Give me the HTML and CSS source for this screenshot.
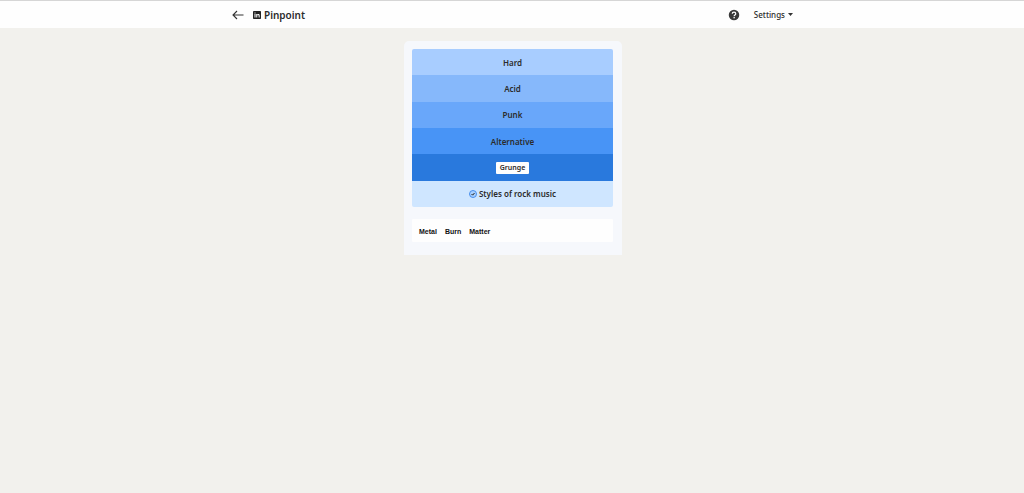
FILE: index.html
```
<!DOCTYPE html>
<html lang="en">
<head>
  <meta charset="UTF-8">
  <meta name="viewport" content="width=device-width, initial-scale=1.0">
  <title>Pinpoint</title>
  <link rel="stylesheet" href="styles.css">
</head>
<body>
  <header class="header">
    <div class="header-inner">
      <a href="#" class="back" aria-label="Back">
        <svg width="12" height="10" viewBox="0 0 12 10"><path d="M11.5 5H1M5 1L1 5l4 4" fill="none" stroke="#333" stroke-width="1.1"/></svg>
      </a>
      <div class="brand">
        <svg width="8" height="8" viewBox="0 0 16 16"><rect width="16" height="16" rx="1.5" fill="#222"/><path d="M3 6h2v7H3zM3 3h2v2H3zM6.5 6h2v1c1-1.600 4.800-1.800 4.800 2v4h-2V9.500c0-2.400-2.800-2.200-2.800 0V13h-2z" fill="#fff"/></svg>
        <h1>Pinpoint</h1>
      </div>
      <button class="help" aria-label="Help">
        <svg width="12" height="12" viewBox="0 0 24 24"><circle cx="12" cy="12" r="10.500" fill="#3a3a3a"/><path d="M8.500 9.500c0-4.500 7-4.500 7 0 0 2.500-3.300 2.500-3.300 5" fill="none" stroke="#fff" stroke-width="2.400"/><rect x="11" y="16" width="2.600" height="2.600" fill="#fff"/></svg>
      </button>
      <button class="settings">Settings
        <svg width="5" height="3" viewBox="0 0 5 3"><path d="M0 0h5L2.500 3z" fill="#333"/></svg>
      </button>
    </div>
  </header>

  <main class="game">
    <section class="card">
      <div class="board">
        <div class="row clue1">Hard</div>
        <div class="row clue2">Acid</div>
        <div class="row clue3">Punk</div>
        <div class="row clue4">Alternative</div>
        <div class="row clue5"><span class="tag">Grunge</span></div>
        <div class="row answer">
          <svg width="8" height="8" viewBox="0 0 16 16"><circle cx="8" cy="8" r="7" fill="#a8d0ff" stroke="#3b86ea" stroke-width="1.800"/><path d="M5 8l2.300 2.300 3.700-4.300" fill="none" stroke="#222" stroke-width="2"/></svg>
          Styles of rock music
        </div>
      </div>
      <div class="guesses">
        <span>Metal</span>
        <span>Burn</span>
        <span>Matter</span>
      </div>
    </section>
  </main>
</body>
</html>
```

FILE: styles.css
```
* { box-sizing: border-box; }
body { margin: 0; background-color: #f2f1ed; font-family: "Noto Sans", "Open Sans", sans-serif; font-size: 8px; color: #2b2b2b; }
button { padding: 0; border: none; background: none; font: inherit; color: inherit; cursor: pointer; }
svg { display: block; flex: none; }

.header { background: #fefefe; border-top: 1px solid #d6d6d6; }
.header-inner { display: flex; align-items: center; max-width: 562px; height: 27px; margin: auto; padding-left: 1px; }
.back { margin-right: 9px; }
.brand { display: flex; align-items: center; gap: 3px; flex: 1; }
.brand h1 { margin: 0; font-size: 10px; font-weight: 600; line-height: 14px; }
.help { margin-right: 14px; }
.settings { display: flex; align-items: center; gap: 3px; font-weight: 500; line-height: 12px; }

.game { padding: 13px 0 12px 2px; }
.card { max-width: 218px; margin: auto; padding: 8px 9px 13px 8px; border-radius: 5px 5px 0 0; background: #f6f8fc; }
.board { display: grid; grid-template-rows: repeat(6, 1fr); height: 158px; border-radius: 2px; overflow: hidden; }
.row { display: flex; align-items: center; justify-content: center; gap: 2px; padding-top: 1px; font-weight: 600; line-height: 12px; }
.clue1 { background: #a8cdff; }
.clue2 { background: #86b8fb; }
.clue3 { background: #69a7fa; }
.clue4 { background: #4894f6; }
.clue5 { background: #2979dd; }
.answer { background: #cfe6ff; }
.tag { padding: 0 4px; background: #fefefe; border-radius: 1px; font-size: 7px; }
.guesses { display: flex; align-items: center; gap: 8px; height: 23px; margin-top: 12px; padding: 1px 7px 0; background: #fefefe; border-radius: 1px; font-family: "Liberation Sans", Arial, sans-serif; font-size: 7px; font-weight: bold; color: #111; }
```
